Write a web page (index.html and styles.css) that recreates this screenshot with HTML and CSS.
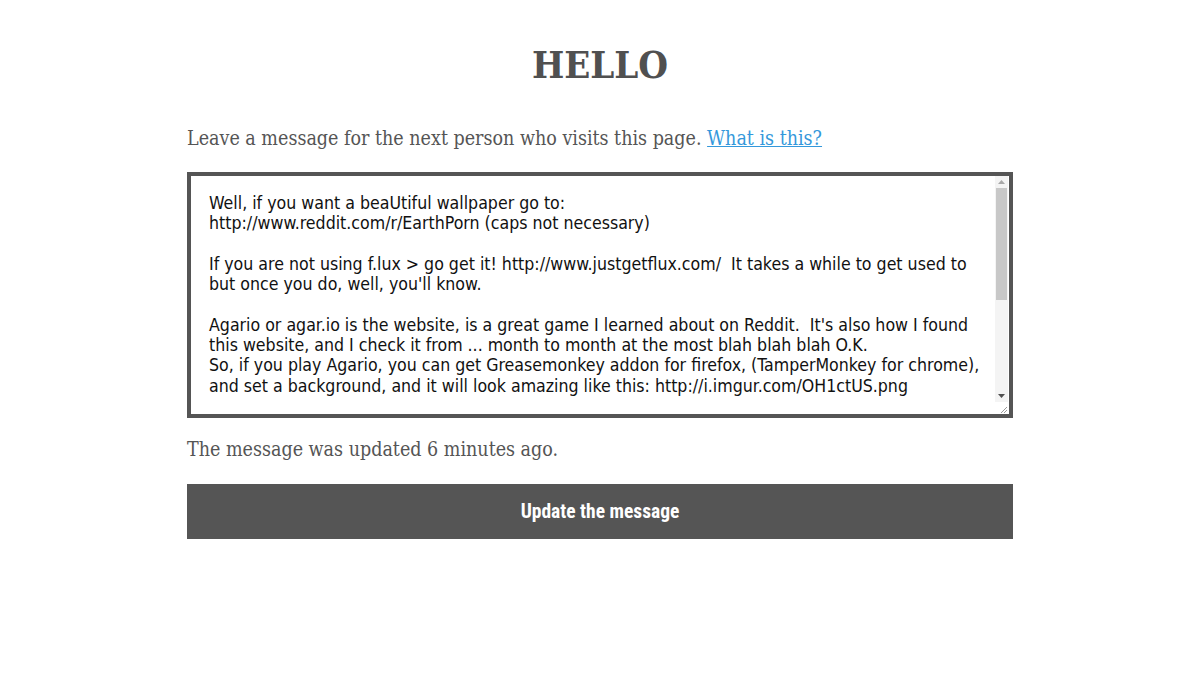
FILE: index.html
```html
<!DOCTYPE html>
<html>
<head>
<meta charset="utf-8">
<link rel="stylesheet" href="styles.css">
</head>
<body>
<main class="page">
  <h1 class="title">HELLO</h1>
  <p class="intro">Leave a message for the next person who visits this page. <a class="link" href="#">What is this?</a></p>
  <div class="box">
    <textarea class="message">Well, if you want a beaUtiful wallpaper go to:
http://www.reddit.com/r/EarthPorn (caps not necessary)

If you are not using f.lux &gt; go get it! http://www.justgetflux.com/  It takes a while to get used to but once you do, well, you'll know.

Agario or agar.io is the website, is a great game I learned about on Reddit.  It's also how I found this website, and I check it from ... month to month at the most blah blah blah O.K.
So, if you play Agario, you can get Greasemonkey addon for firefox, (TamperMonkey for chrome), and set a background, and it will look amazing like this: http://i.imgur.com/OH1ctUS.png</textarea>
    <div class="scrollbar">
      <div class="sb-btn"><svg width="7" height="4" viewBox="0 0 7 4"><polygon points="0,4 3.5,0 7,4" fill="#a8a8a8"/></svg></div>
      <div class="sb-track"><div class="sb-thumb"></div></div>
      <div class="sb-btn"><svg width="7" height="4" viewBox="0 0 7 4"><polygon points="0,0 7,0 3.5,4" fill="#505050"/></svg></div>
      <div class="sb-resizer"><svg width="10" height="10" viewBox="0 0 10 10"><path d="M9 3 L3 9 M9 6 L6 9" stroke="#9a9a9a" stroke-width="1"/></svg></div>
    </div>
  </div>
  <p class="updated">The message was updated 6 minutes ago.</p>
  <button class="btn">Update the message</button>
</main>
</body>
</html>
```
FILE: styles.css
```css
html, body {
  margin: 0;
  padding: 0;
  background: #fff;
}
.page {
  width: 826px;
  margin: 0 auto;
  display: flex;
  flex-direction: column;
  color: #555;
  font-family: "DejaVu Serif Condensed", "DejaVu Serif", serif;
  font-stretch: condensed;
}
.title {
  margin: 40px 0 0;
  text-align: center;
  font-size: 38px;
  line-height: 50px;
  font-weight: bold;
  color: #505050;
}
.intro {
  margin: 36px 0 0;
  font-size: 19.5px;
  line-height: 26px;
}
.link {
  color: #3498db;
  text-decoration: underline;
}
.box {
  margin-top: 20px;
  box-sizing: border-box;
  height: 246px;
  border: 4px solid #555;
  display: flex;
  background: #fff;
}
.message {
  flex: 1;
  min-width: 0;
  border: 0;
  margin: 0;
  padding: 17px 8px 17px 18px;
  font-family: "DejaVu Sans Condensed", sans-serif;
  font-stretch: condensed;
  font-size: 17.6px;
  line-height: 20.3px;
  color: #111;
  resize: none;
  outline: none;
  overflow: hidden;
  background: #fff;
}
.scrollbar {
  width: 13px;
  margin-right: 1px;
  display: flex;
  flex-direction: column;
  background: #f4f4f4;
}
.sb-btn {
  height: 12px;
  display: flex;
  align-items: center;
  justify-content: center;
}
.sb-track {
  flex: 1;
  display: flex;
  flex-direction: column;
}
.sb-thumb {
  height: 112px;
  margin: 0 1px;
  background: #c8c8c8;
}
.sb-resizer {
  height: 12px;
  background: #fff;
  display: flex;
  align-items: flex-end;
  justify-content: flex-end;
}
.updated {
  margin: 19px 0 0;
  font-size: 19.5px;
  line-height: 26px;
}
.btn {
  margin-top: 21px;
  height: 55px;
  border: 0;
  background: #555;
  color: #fff;
  font-family: "Roboto", "DejaVu Sans Condensed", sans-serif;
  font-stretch: 75%;
  font-weight: bold;
  font-size: 19.5px;
  cursor: pointer;
}
```
